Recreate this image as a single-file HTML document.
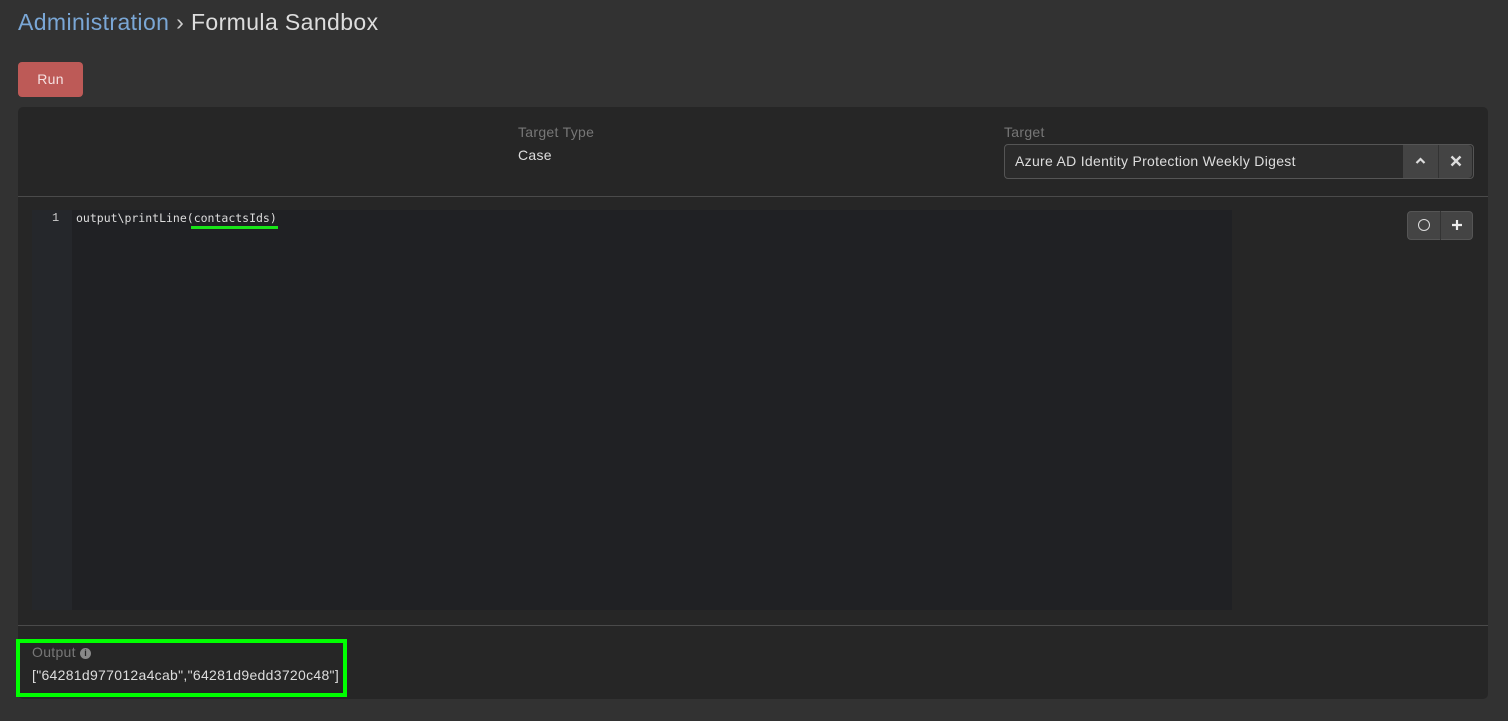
<!DOCTYPE html>
<html><head><style>
body{margin:0;width:1508px;height:721px;background:#323232;font-family:"Liberation Sans","DejaVu Sans",sans-serif;position:relative;overflow:hidden;color:#ddd;letter-spacing:0.3px}
.a{position:absolute}
</style></head><body>
<div class="a" style="left:18px;top:9px;font-size:23px;letter-spacing:0.4px;color:#7aa7d6">Administration <span style="color:#ccc">› </span><span style="color:#ddd">Formula Sandbox</span></div>
<div class="a" style="left:18px;top:62px;width:65px;height:35px;background:#bd5a57;border-radius:4px;color:#f5e0e0;font-size:14px;line-height:35px;text-align:center">Run</div>
<div class="a" style="left:18px;top:107px;width:1470px;height:592px;background:#262626;border-radius:5px"></div>
<div class="a" style="left:518px;top:124px;font-size:14px;color:#777">Target Type</div>
<div class="a" style="left:518px;top:147px;font-size:14px;color:#ddd">Case</div>
<div class="a" style="left:1004px;top:124px;font-size:14px;color:#777">Target</div>
<div class="a" style="left:1004px;top:144px;width:468px;height:33px;border:1px solid #555;border-radius:4px;background:#2b2b2b"></div>
<div class="a" style="left:1015px;top:153px;font-size:14px;color:#ddd">Azure AD Identity Protection Weekly Digest</div>
<div class="a" style="left:1403px;top:145px;width:69px;height:33px;background:#444;border-radius:0 4px 4px 0"></div>
<div class="a" style="left:1438px;top:145px;width:1px;height:33px;background:#333"></div>
<svg class="a" style="left:1415px;top:157px" width="11" height="8" viewBox="0 0 11 8"><path d="M1.5 6 L5.5 2 L9.5 6" stroke="#ddd" stroke-width="2.2" fill="none"/></svg>
<svg class="a" style="left:1450px;top:155px" width="12" height="12" viewBox="0 0 12 12"><path d="M1.5 1.5 L10.5 10.5 M10.5 1.5 L1.5 10.5" stroke="#ddd" stroke-width="2.4"/></svg>
<div class="a" style="left:18px;top:196px;width:1470px;height:1px;background:#4a4a4a"></div>
<div class="a" style="left:32px;top:210px;width:1200px;height:400px;background:#202124"></div>
<div class="a" style="left:32px;top:210px;width:40px;height:400px;background:#25272b"></div>
<div class="a" style="left:52px;top:211px;font-family:'Liberation Mono',monospace;font-size:12px;color:#ccc">1</div>
<div class="a" style="left:76px;top:211px;font-family:'DejaVu Sans Mono','Liberation Mono',monospace;font-size:11.5px;letter-spacing:0;color:#ddd">output\printLine(contactsIds)</div>
<div class="a" style="left:191px;top:226px;width:87px;height:3px;background:#18e618"></div>
<div class="a" style="left:1407px;top:211px;width:66px;height:29px;background:#444;border-radius:4px;border:1px solid #555;box-sizing:border-box"></div>
<div class="a" style="left:1440px;top:211px;width:1px;height:29px;background:#333"></div>
<div class="a" style="left:1418px;top:219px;width:10px;height:10px;border:1.5px solid #ddd;border-radius:50%"></div>
<svg class="a" style="left:1451px;top:219px" width="12" height="12" viewBox="0 0 12 12"><path d="M6 1 V11 M1 6 H11" stroke="#eee" stroke-width="2.2"/></svg>
<div class="a" style="left:18px;top:625px;width:1470px;height:1px;background:#4a4a4a"></div>
<div class="a" style="left:16px;top:639px;width:331px;height:58px;border:4px solid #00ff00;box-sizing:border-box"></div>
<div class="a" style="left:32px;top:644px;font-size:14px;color:#777">Output <span style="display:inline-block;width:11px;height:11px;border-radius:50%;background:#888;color:#262626;font-size:9px;line-height:11px;text-align:center;font-weight:bold;vertical-align:1px;letter-spacing:0">i</span></div>
<div class="a" style="left:32px;top:667px;font-size:14px;color:#ddd">["64281d977012a4cab","64281d9edd3720c48"]</div>
</body></html>
